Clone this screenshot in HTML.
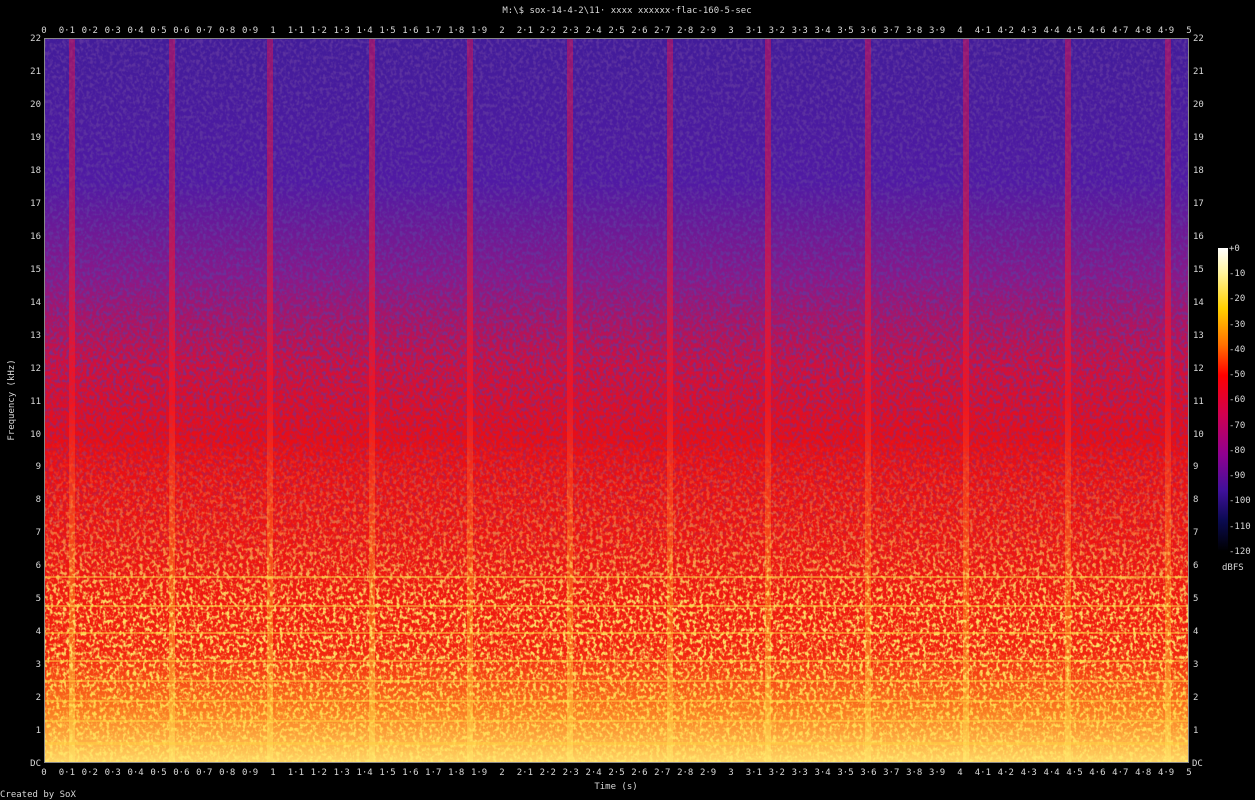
<!DOCTYPE html>
<html><head><meta charset="utf-8"><style>
html,body{margin:0;padding:0;background:#000;width:1255px;height:800px;overflow:hidden}
svg{display:block}
text{font-family:"DejaVu Sans Mono","Liberation Mono",monospace;font-size:9px;fill:#d8d8d8}
</style></head><body>
<svg width="1255" height="800" viewBox="0 0 1255 800" xmlns="http://www.w3.org/2000/svg">
<defs>
<linearGradient id="bg" x1="0" y1="0" x2="0" y2="1">
<stop offset="0" stop-color="#421c9a"/>
<stop offset="0.2" stop-color="#501aa4"/>
<stop offset="0.33" stop-color="#8a1888"/>
<stop offset="0.45" stop-color="#d0103c"/>
<stop offset="0.56" stop-color="#ea0e14"/>
<stop offset="0.78" stop-color="#f01a10"/>
<stop offset="1" stop-color="#f83810"/>
</linearGradient>
<linearGradient id="streak" x1="0" y1="0" x2="0" y2="1">
<stop offset="0" stop-color="#e8104a" stop-opacity="0.45"/>
<stop offset="0.5" stop-color="#ff1818" stop-opacity="0.6"/>
<stop offset="0.8" stop-color="#ffa020" stop-opacity="0.5"/>
<stop offset="1" stop-color="#ffe060" stop-opacity="0.6"/>
</linearGradient>
<linearGradient id="cb" x1="0" y1="0" x2="0" y2="1">
<stop offset="0" stop-color="#ffffff"/>
<stop offset="0.08" stop-color="#fff4a0"/>
<stop offset="0.2" stop-color="#ffd000"/>
<stop offset="0.32" stop-color="#ff7000"/>
<stop offset="0.42" stop-color="#ff0000"/>
<stop offset="0.55" stop-color="#d00050"/>
<stop offset="0.68" stop-color="#900090"/>
<stop offset="0.8" stop-color="#40109a"/>
<stop offset="0.9" stop-color="#0a0a50"/>
<stop offset="1" stop-color="#000000"/>
</linearGradient>
<filter id="dark" x="0" y="0" width="1" height="1">
<feTurbulence type="fractalNoise" baseFrequency="0.3 0.25" numOctaves="2" seed="3"/>
<feColorMatrix type="matrix" values="0 0 0 0 0.12  0 0 0 0 0.04  0 0 0 0 0.35  0 0 0 -3.5 2.0"/>
</filter>
<filter id="bright" x="0" y="0" width="1" height="1">
<feTurbulence type="fractalNoise" baseFrequency="0.3 0.25" numOctaves="2" seed="9"/>
<feColorMatrix type="matrix" values="0 0 0 0 1  0 0 0 0 0.82  0 0 0 0 0.15  0 0 0 4 -1.8"/>
</filter>
<linearGradient id="darkmask" x1="0" y1="0" x2="0" y2="1">
<stop offset="0" stop-color="#fff" stop-opacity="0.8"/>
<stop offset="0.45" stop-color="#fff" stop-opacity="0.7"/>
<stop offset="0.62" stop-color="#fff" stop-opacity="0.3"/>
<stop offset="0.78" stop-color="#fff" stop-opacity="0"/>
</linearGradient>
<linearGradient id="brightmask" x1="0" y1="0" x2="0" y2="1">
<stop offset="0" stop-color="#fff" stop-opacity="0"/>
<stop offset="0.55" stop-color="#fff" stop-opacity="0"/>
<stop offset="0.68" stop-color="#fff" stop-opacity="0.4"/>
<stop offset="0.78" stop-color="#fff" stop-opacity="0.9"/>
<stop offset="1" stop-color="#fff" stop-opacity="1"/>
</linearGradient>
<linearGradient id="yb" x1="0" y1="0" x2="0" y2="1">
<stop offset="0" stop-color="#ffb020" stop-opacity="0"/>
<stop offset="0.5" stop-color="#ffc830" stop-opacity="0.45"/>
<stop offset="1" stop-color="#ffe870" stop-opacity="0.9"/>
</linearGradient>
<mask id="dm"><rect x="44" y="38" width="1145" height="725" fill="url(#darkmask)"/></mask>
<mask id="bm"><rect x="44" y="38" width="1145" height="725" fill="url(#brightmask)"/></mask>
</defs>

<text x="627" y="13" text-anchor="middle">M:\$ sox-14-4-2\11· xxxx xxxxxx·flac-160-5-sec</text>

<rect x="44" y="38" width="1145" height="725" fill="url(#bg)"/>
<rect x="44" y="38" width="1145" height="725" filter="url(#dark)" mask="url(#dm)"/>
<g fill="url(#streak)">
<rect x="69" y="38" width="6" height="725"/><rect x="169" y="38" width="6" height="725"/>
<rect x="267" y="38" width="6" height="725"/><rect x="369" y="38" width="6" height="725"/>
<rect x="467" y="38" width="6" height="725"/><rect x="567" y="38" width="6" height="725"/>
<rect x="667" y="38" width="6" height="725"/><rect x="765" y="38" width="6" height="725"/>
<rect x="865" y="38" width="6" height="725"/><rect x="963" y="38" width="6" height="725"/>
<rect x="1065" y="38" width="6" height="725"/><rect x="1165" y="38" width="6" height="725"/>
</g>
<rect x="44" y="38" width="1145" height="725" filter="url(#bright)" mask="url(#bm)"/>
<rect x="44" y="650" width="1145" height="113" fill="url(#yb)"/>
<g fill="#ffd040" opacity="0.5">
<rect x="44" y="742" width="1145" height="3"/><rect x="44" y="720" width="1145" height="2"/>
<rect x="44" y="700" width="1145" height="2"/><rect x="44" y="680" width="1145" height="2"/>
<rect x="44" y="660" width="1145" height="2"/><rect x="44" y="632" width="1145" height="2"/>
<rect x="44" y="605" width="1145" height="2"/><rect x="44" y="576" width="1145" height="2"/>
</g>
<rect x="44.5" y="38.5" width="1144" height="724" fill="none" stroke="#888" stroke-width="1"/>

<g text-anchor="middle">
<text x="44" y="33">0</text><text x="66.9" y="33">0·1</text><text x="89.8" y="33">0·2</text><text x="112.7" y="33">0·3</text><text x="135.6" y="33">0·4</text><text x="158.5" y="33">0·5</text><text x="181.4" y="33">0·6</text><text x="204.3" y="33">0·7</text><text x="227.2" y="33">0·8</text><text x="250.1" y="33">0·9</text><text x="273" y="33">1</text><text x="295.9" y="33">1·1</text><text x="318.8" y="33">1·2</text><text x="341.7" y="33">1·3</text><text x="364.6" y="33">1·4</text><text x="387.5" y="33">1·5</text><text x="410.4" y="33">1·6</text><text x="433.3" y="33">1·7</text><text x="456.2" y="33">1·8</text><text x="479.1" y="33">1·9</text><text x="502" y="33">2</text><text x="524.9" y="33">2·1</text><text x="547.8" y="33">2·2</text><text x="570.7" y="33">2·3</text><text x="593.6" y="33">2·4</text><text x="616.5" y="33">2·5</text><text x="639.4" y="33">2·6</text><text x="662.3" y="33">2·7</text><text x="685.2" y="33">2·8</text><text x="708.1" y="33">2·9</text><text x="731" y="33">3</text><text x="753.9" y="33">3·1</text><text x="776.8" y="33">3·2</text><text x="799.7" y="33">3·3</text><text x="822.6" y="33">3·4</text><text x="845.5" y="33">3·5</text><text x="868.4" y="33">3·6</text><text x="891.3" y="33">3·7</text><text x="914.2" y="33">3·8</text><text x="937.1" y="33">3·9</text><text x="960" y="33">4</text><text x="982.9" y="33">4·1</text><text x="1005.8" y="33">4·2</text><text x="1028.7" y="33">4·3</text><text x="1051.6" y="33">4·4</text><text x="1074.5" y="33">4·5</text><text x="1097.4" y="33">4·6</text><text x="1120.3" y="33">4·7</text><text x="1143.2" y="33">4·8</text><text x="1166.1" y="33">4·9</text><text x="1189" y="33">5</text>
</g>
<g text-anchor="middle">
<text x="44" y="775">0</text><text x="66.9" y="775">0·1</text><text x="89.8" y="775">0·2</text><text x="112.7" y="775">0·3</text><text x="135.6" y="775">0·4</text><text x="158.5" y="775">0·5</text><text x="181.4" y="775">0·6</text><text x="204.3" y="775">0·7</text><text x="227.2" y="775">0·8</text><text x="250.1" y="775">0·9</text><text x="273" y="775">1</text><text x="295.9" y="775">1·1</text><text x="318.8" y="775">1·2</text><text x="341.7" y="775">1·3</text><text x="364.6" y="775">1·4</text><text x="387.5" y="775">1·5</text><text x="410.4" y="775">1·6</text><text x="433.3" y="775">1·7</text><text x="456.2" y="775">1·8</text><text x="479.1" y="775">1·9</text><text x="502" y="775">2</text><text x="524.9" y="775">2·1</text><text x="547.8" y="775">2·2</text><text x="570.7" y="775">2·3</text><text x="593.6" y="775">2·4</text><text x="616.5" y="775">2·5</text><text x="639.4" y="775">2·6</text><text x="662.3" y="775">2·7</text><text x="685.2" y="775">2·8</text><text x="708.1" y="775">2·9</text><text x="731" y="775">3</text><text x="753.9" y="775">3·1</text><text x="776.8" y="775">3·2</text><text x="799.7" y="775">3·3</text><text x="822.6" y="775">3·4</text><text x="845.5" y="775">3·5</text><text x="868.4" y="775">3·6</text><text x="891.3" y="775">3·7</text><text x="914.2" y="775">3·8</text><text x="937.1" y="775">3·9</text><text x="960" y="775">4</text><text x="982.9" y="775">4·1</text><text x="1005.8" y="775">4·2</text><text x="1028.7" y="775">4·3</text><text x="1051.6" y="775">4·4</text><text x="1074.5" y="775">4·5</text><text x="1097.4" y="775">4·6</text><text x="1120.3" y="775">4·7</text><text x="1143.2" y="775">4·8</text><text x="1166.1" y="775">4·9</text><text x="1189" y="775">5</text>
</g>
<g text-anchor="end">
<text x="41" y="766">DC</text><text x="41" y="733">1</text><text x="41" y="700">2</text><text x="41" y="667">3</text><text x="41" y="634">4</text><text x="41" y="601">5</text><text x="41" y="568">6</text><text x="41" y="535">7</text><text x="41" y="502">8</text><text x="41" y="469">9</text><text x="41" y="437">10</text><text x="41" y="404">11</text><text x="41" y="371">12</text><text x="41" y="338">13</text><text x="41" y="305">14</text><text x="41" y="272">15</text><text x="41" y="239">16</text><text x="41" y="206">17</text><text x="41" y="173">18</text><text x="41" y="140">19</text><text x="41" y="107">20</text><text x="41" y="74">21</text><text x="41" y="41">22</text>
</g>
<g text-anchor="start">
<text x="1192" y="766">DC</text><text x="1193" y="733">1</text><text x="1193" y="700">2</text><text x="1193" y="667">3</text><text x="1193" y="634">4</text><text x="1193" y="601">5</text><text x="1193" y="568">6</text><text x="1193" y="535">7</text><text x="1193" y="502">8</text><text x="1193" y="469">9</text><text x="1193" y="437">10</text><text x="1193" y="404">11</text><text x="1193" y="371">12</text><text x="1193" y="338">13</text><text x="1193" y="305">14</text><text x="1193" y="272">15</text><text x="1193" y="239">16</text><text x="1193" y="206">17</text><text x="1193" y="173">18</text><text x="1193" y="140">19</text><text x="1193" y="107">20</text><text x="1193" y="74">21</text><text x="1193" y="41">22</text>
</g>
<text x="14" y="400" text-anchor="middle" transform="rotate(-90 14 400)">Frequency (kHz)</text>
<text x="616" y="789" text-anchor="middle">Time (s)</text>
<text x="0" y="797">Created by SoX</text>

<rect x="1218" y="248" width="10" height="303" fill="url(#cb)"/>
<g text-anchor="start">
<text x="1229" y="251">+0</text><text x="1229" y="276">-10</text><text x="1229" y="301">-20</text><text x="1229" y="327">-30</text><text x="1229" y="352">-40</text><text x="1229" y="377">-50</text><text x="1229" y="402">-60</text><text x="1229" y="428">-70</text><text x="1229" y="453">-80</text><text x="1229" y="478">-90</text><text x="1229" y="503">-100</text><text x="1229" y="529">-110</text><text x="1229" y="554">-120</text>
</g>
<text x="1222" y="570">dBFS</text>
</svg>
</body></html>
